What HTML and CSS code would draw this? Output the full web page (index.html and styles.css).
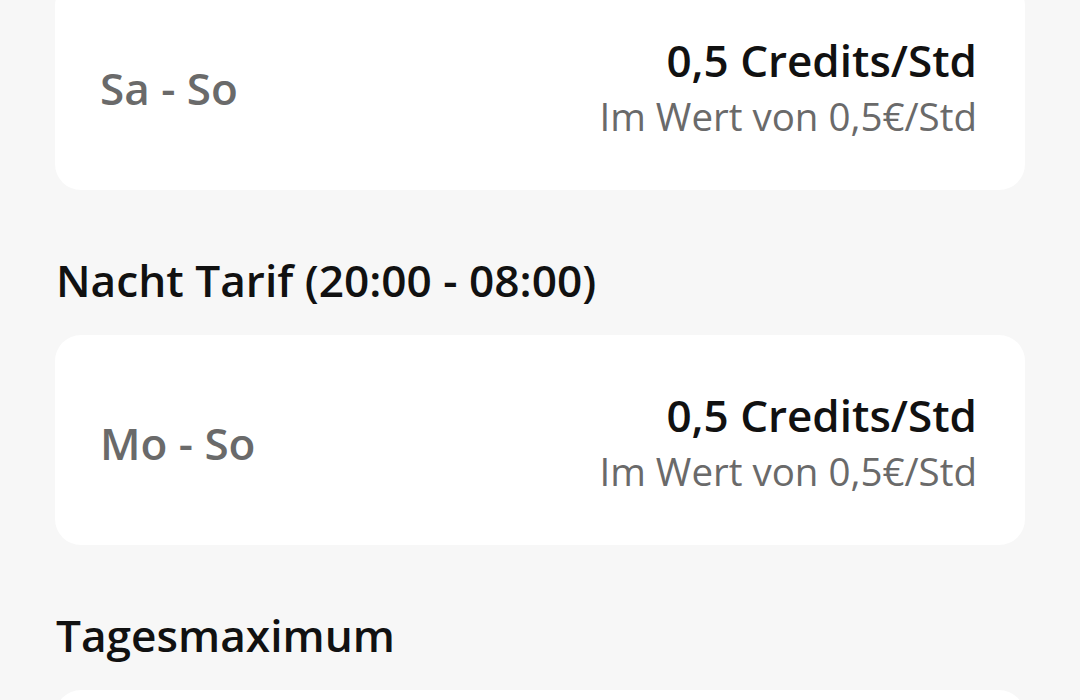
FILE: index.html
```html
<!DOCTYPE html>
<html lang="de">

<head>
    <meta charset="UTF-8" />
    <meta name="viewport" content="width=device-width, initial-scale=1" />
    <title>Tarife</title>
    <link rel="stylesheet" href="styles.css">
</head>

<body>
    <div class="tariffs">
        <div class="tariff-card first">
            <div class="days">Sa - So</div>
            <div class="price">
                <div class="credits">0,5 Credits/Std</div>
                <div class="worth">Im Wert von 0,5€/Std</div>
            </div>
        </div>

        <h2 class="section-title">Nacht Tarif (20:00 - 08:00)</h2>

        <div class="tariff-card">
            <div class="days">Mo - So</div>
            <div class="price">
                <div class="credits">0,5 Credits/Std</div>
                <div class="worth">Im Wert von 0,5€/Std</div>
            </div>
        </div>

        <h2 class="section-title">Tagesmaximum</h2>

        <div class="tariff-card"></div>
    </div>
</body>

</html>
```

FILE: styles.css
```css
* {
    box-sizing: border-box;
}

body {
    font-family: "Open Sans", "Noto Sans", sans-serif;
    background: #f7f7f7;
    margin: 0;
    overflow: hidden;
}

.tariffs {
    display: flex;
    flex-direction: column;
    padding: 0 55px;
}

.tariff-card {
    background: #fff;
    border-radius: 26px;
    height: 210px;
    flex-shrink: 0;
    display: flex;
    justify-content: space-between;
    align-items: center;
    padding: 6px 48px 0 45px;
}

.tariff-card.first {
    margin-top: -20px;
}

.days {
    font-size: 44px;
    font-weight: 600;
    color: #6a6a6a;
    line-height: 56px;
}

.price {
    text-align: right;
}

.credits {
    font-size: 44px;
    font-weight: 600;
    color: #111;
    line-height: 56px;
}

.worth {
    font-size: 38.5px;
    color: #6a6a6a;
    line-height: 56px;
}

.section-title {
    font-size: 44.2px;
    font-weight: 600;
    color: #111;
    line-height: 60px;
    margin: 60px 0 25px 1px;
}
```
